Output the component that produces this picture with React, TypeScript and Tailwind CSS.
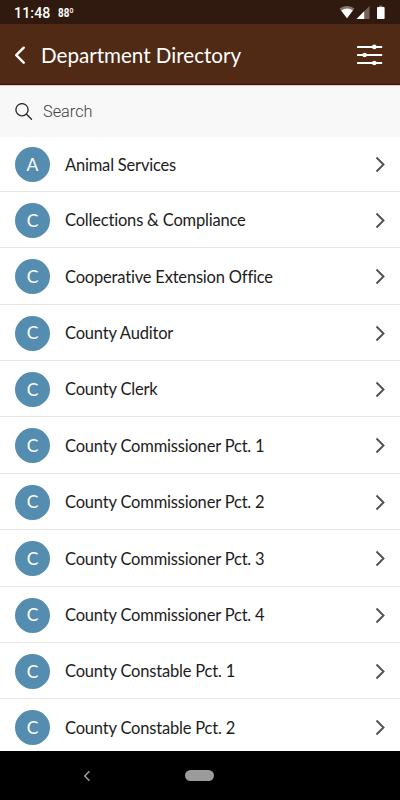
import React from 'react';

const departments = [
    'Animal Services',
    'Collections & Compliance',
    'Cooperative Extension Office',
    'County Auditor',
    'County Clerk',
    'County Commissioner Pct. 1',
    'County Commissioner Pct. 2',
    'County Commissioner Pct. 3',
    'County Commissioner Pct. 4',
    'County Constable Pct. 1',
    'County Constable Pct. 2',
];

const StatusBar: React.FC = () => (
    <div className="h-6 shrink-0 bg-[#30190e] flex items-center pl-[14px] pr-[14px] text-white font-['Roboto',sans-serif]">
        <span className="text-[14.2px] leading-none font-medium tracking-[0.1px] pt-[2px]">11:48</span>
        <span className="ml-[7px] text-[12px] leading-none font-bold pt-[2px] inline-block origin-left scale-x-[0.82]">88º</span>
        <svg className="ml-auto" width="47" height="16" viewBox="0 0 47 16" fill="none">
            <path d="M0.6 4.6C5 1 11 1 15.4 4.6L8 14.2Z" fill="#85746c" />
            <path d="M2.2 6.6C6 3.9 10.4 3.9 13.8 6.6L8 14.2Z" fill="#fff" />
            <path d="M30.5 2V15H17.5Z" fill="#75625a" />
            <path d="M25.2 7.3V15H17.5Z" fill="#fff" />
            <path d="M40 1.6h3.4v1.6H40z" fill="#85746c" />
            <rect x="38" y="3" width="7.6" height="12" rx="0.8" fill="#fff" />
        </svg>
    </div>
);

const Header: React.FC = () => (
    <div className="h-[61px] shrink-0 bg-[#502a15] border-b border-[#4a0710] flex items-center pl-[14px] pr-[17px] text-white">
        <button className="w-[27px] pt-[1px]" aria-label="Back">
            <svg width="12" height="18" viewBox="0 0 12 18" fill="none" stroke="currentColor" strokeWidth="2.4" strokeLinecap="round" strokeLinejoin="round">
                <path d="M9.7 1.7L2.2 9.2l7.5 7.5" />
            </svg>
        </button>
        <h1 className="text-[20.6px] leading-7 pt-[1px]">Department Directory</h1>
        <button className="ml-auto pt-[2px]" aria-label="Filter">
            <svg width="26" height="22" viewBox="0 0 26 22" fill="currentColor">
                <rect x="0" y="2" width="25.2" height="1.9" rx="0.5" />
                <rect x="0" y="10" width="25.2" height="1.9" rx="0.5" />
                <rect x="0" y="18" width="25.2" height="1.9" rx="0.5" />
                <circle cx="17.3" cy="2.9" r="2.3" />
                <circle cx="7.6" cy="11" r="2.3" />
                <circle cx="17.3" cy="19" r="2.3" />
            </svg>
        </button>
    </div>
);

const SearchBar: React.FC = () => (
    <div className="h-[52px] shrink-0 bg-[#f8f8f8] border-t border-[#dccfd2] flex items-center pl-[15px]">
        <svg width="18" height="18" viewBox="0 0 18 18" fill="none" stroke="#2b2b2b" strokeWidth="1.35" strokeLinecap="round">
            <circle cx="7" cy="6.7" r="6.1" />
            <path d="M11.5 11.2l5 5" />
        </svg>
        <span className="ml-[10px] text-[16.3px] leading-6 text-[#404040] font-['Roboto',sans-serif] font-[340] pt-[1px]">Search</span>
    </div>
);

const DepartmentRow: React.FC<{ name: string }> = ({ name }) => (
    <li className="h-[56.4px] first:h-[54.9px] shrink-0 border-b border-[#e6e6e6] flex items-center pl-[15px] pr-[14px] pt-[1.4px]">
        <span className="size-[35px] rounded-full bg-[#548db0] text-white text-[17.5px] leading-none flex items-center justify-center">
            {name[0]}
        </span>
        <span className="ml-[15px] text-[16.5px] leading-6 tracking-[-0.19px] text-[#1c1c1c]">{name}</span>
        <svg className="ml-auto" width="11" height="17" viewBox="0 0 11 17" fill="none" stroke="#505050" strokeWidth="1.9">
            <path d="M1.5 1.5l7 7-7 7" />
        </svg>
    </li>
);

const NavigationBar: React.FC = () => (
    <div className="h-[49px] shrink-0 bg-black grid grid-cols-3 items-center justify-items-center">
        <svg className="ml-[41px]" width="8" height="12" viewBox="0 0 8 12" fill="none" stroke="#9a9a9a" strokeWidth="1.6">
            <path d="M6.4 1.2L1.8 6l4.6 4.8" />
        </svg>
        <span className="w-[29px] h-[11px] rounded-full bg-[#9b9b9b]" />
    </div>
);

const App: React.FC = () => {
    return (
        <div className="w-full h-[800px] flex flex-col overflow-hidden bg-white font-['Lato',sans-serif]">
            <StatusBar />
            <Header />
            <SearchBar />
            <ul className="flex-1 min-h-0 flex flex-col overflow-hidden">
                {departments.map((name) => (
                    <DepartmentRow key={name} name={name} />
                ))}
            </ul>
            <NavigationBar />
        </div>
    );
};

export default App;
